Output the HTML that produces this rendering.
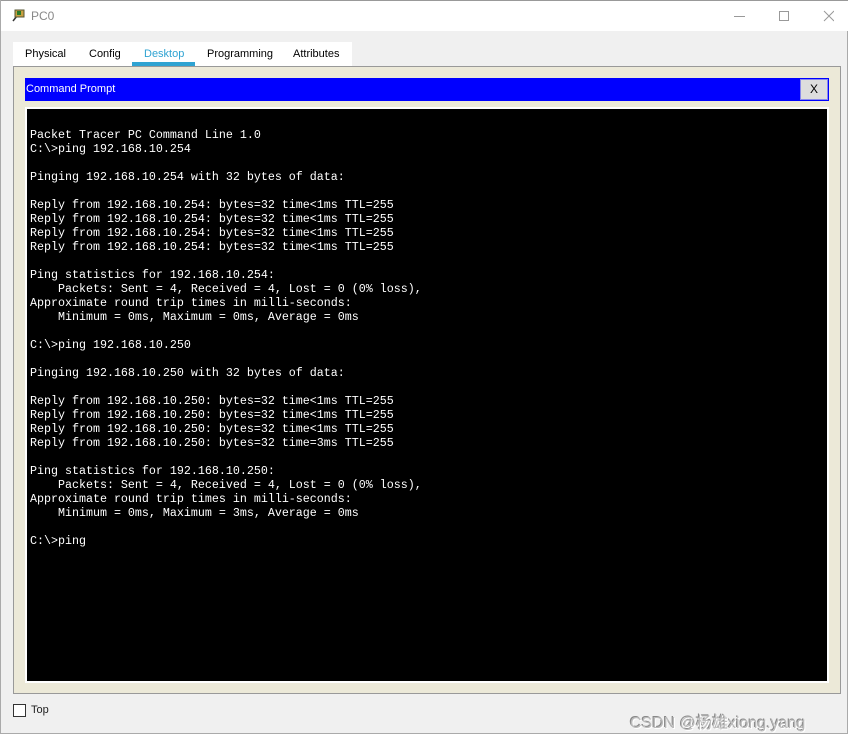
<!DOCTYPE html>
<html><head><meta charset="utf-8"><style>
*{margin:0;padding:0;box-sizing:border-box}
body{width:848px;height:743px;background:#fff;font-family:"Liberation Sans",sans-serif;position:relative;overflow:hidden}
.win{position:absolute;left:0;top:0;width:848px;height:734px;background:#f0f0f0;border:1px solid #aaa;border-top:none}
.title{position:absolute;left:0;top:0;width:848px;height:31px;background:#fff;border-top:1px solid #999}
.title span{position:absolute;left:30px;top:8px;font-size:12px;color:#888}
.tabs{position:absolute;left:12px;top:42px;width:339px;height:24px;background:#fff;font-size:11px;color:#000}
.tabs span{position:absolute;top:6px}
.ul{position:absolute;left:119px;top:20px;width:63px;height:4px;background:#2fa3d2}
.panel{position:absolute;left:12px;top:66px;width:828px;height:628px;background:#ece9d8;border:1px solid #999}
.bar{position:absolute;left:11px;top:11px;width:804px;height:23px;background:#0000ff;color:#fff;font-size:11px;padding:5px 0 0 1px}
.xb{position:absolute;left:786px;top:12px;width:28px;height:21px;background:#ddd;border:1px solid #8888ee;font-size:12px;text-align:center;line-height:19px;color:#000}
.term{position:absolute;left:11px;top:40px;width:804px;height:576px;background:#fff;padding:2px}
.blk{width:100%;height:100%;background:#000}
pre{position:absolute;left:16px;top:61px;color:#fff;font-family:"Liberation Mono",monospace;font-size:11.67px;line-height:14px}
</style></head><body>
<div class="win">
<div class="title">
<svg style="position:absolute;left:9px;top:7px" width="16" height="16"><path d="M3 13 L7 8" stroke="#333" stroke-width="1.5"/><rect x="5" y="2" width="9" height="7" fill="#c8a040" stroke="#553" stroke-width="1"/><rect x="7" y="3" width="4" height="4" fill="#2a7a2a"/></svg>
<span>PC0</span>
<svg style="position:absolute;left:733px;top:9px" width="100" height="14"><line x1="0" y1="6.5" x2="11" y2="6.5" stroke="#999"/><rect x="45.5" y="1.5" width="9" height="9" fill="none" stroke="#999"/><path d="M90 1 L100 11 M100 1 L90 11" stroke="#999"/></svg>
</div>
<div class="tabs"><span style="left:12px">Physical</span><span style="left:76px">Config</span><span style="left:131px;color:#2fa3d2">Desktop</span><span style="left:194px">Programming</span><span style="left:280px">Attributes</span><div class="ul"></div></div>
<div class="panel">
<div class="bar">Command Prompt</div><div class="xb">X</div>
<div class="term"><div class="blk"></div></div>
<pre>Packet Tracer PC Command Line 1.0
C:\&gt;ping 192.168.10.254

Pinging 192.168.10.254 with 32 bytes of data:

Reply from 192.168.10.254: bytes=32 time&lt;1ms TTL=255
Reply from 192.168.10.254: bytes=32 time&lt;1ms TTL=255
Reply from 192.168.10.254: bytes=32 time&lt;1ms TTL=255
Reply from 192.168.10.254: bytes=32 time&lt;1ms TTL=255

Ping statistics for 192.168.10.254:
    Packets: Sent = 4, Received = 4, Lost = 0 (0% loss),
Approximate round trip times in milli-seconds:
    Minimum = 0ms, Maximum = 0ms, Average = 0ms

C:\&gt;ping 192.168.10.250

Pinging 192.168.10.250 with 32 bytes of data:

Reply from 192.168.10.250: bytes=32 time&lt;1ms TTL=255
Reply from 192.168.10.250: bytes=32 time&lt;1ms TTL=255
Reply from 192.168.10.250: bytes=32 time&lt;1ms TTL=255
Reply from 192.168.10.250: bytes=32 time=3ms TTL=255

Ping statistics for 192.168.10.250:
    Packets: Sent = 4, Received = 4, Lost = 0 (0% loss),
Approximate round trip times in milli-seconds:
    Minimum = 0ms, Maximum = 3ms, Average = 0ms

C:\&gt;ping</pre>
</div>
<div style="position:absolute;left:12px;top:704px;width:13px;height:13px;border:1px solid #333;background:#fff"></div>
<div style="position:absolute;left:30px;top:704px;font-size:11px;color:#222">Top</div>
<div style="position:absolute;left:629px;top:709px;font-size:16px;color:#bbb;text-shadow:1px 1px 0 #fff,-1px -1px 0 #888;font-family:'Liberation Sans','Noto Sans CJK SC',sans-serif">CSDN @杨雄xiong.yang</div>
</div>
</body></html>
